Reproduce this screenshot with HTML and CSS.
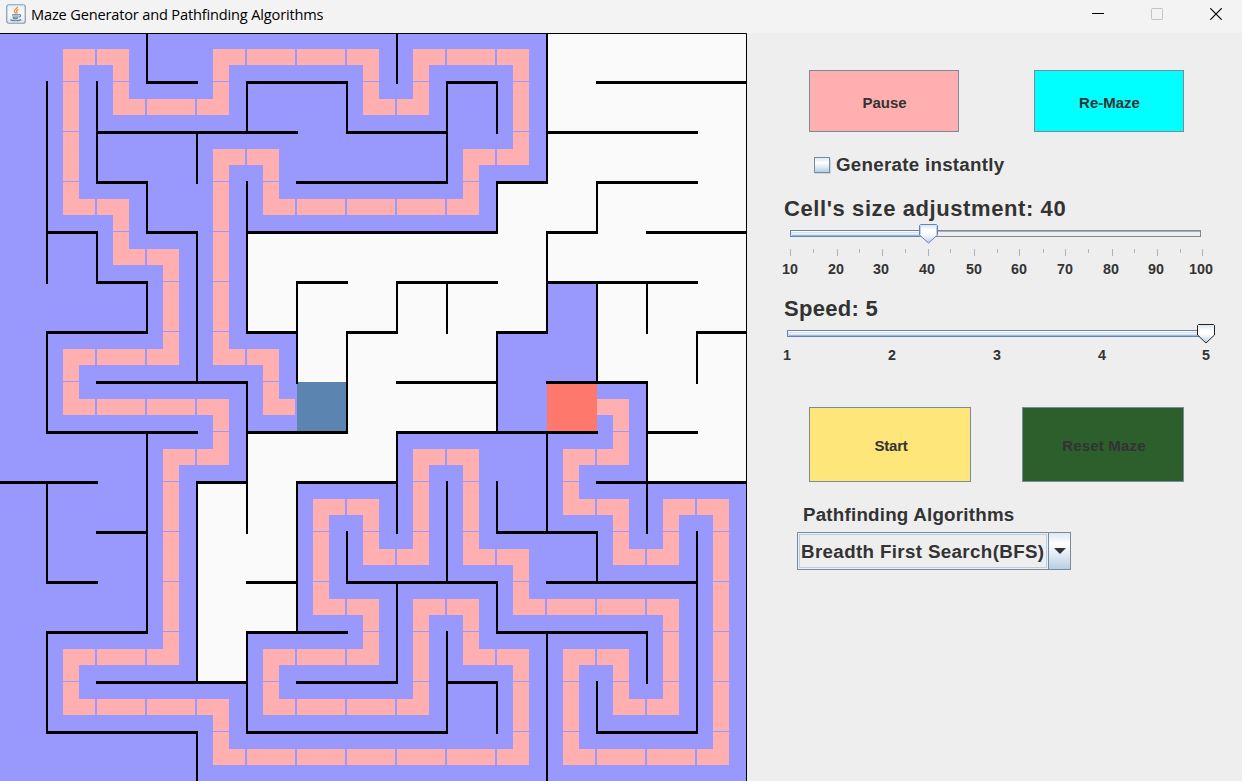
FILE: index.html
```html
<!DOCTYPE html>
<html lang="en">
<head>
<meta charset="utf-8">
<title>Maze Generator and Pathfinding Algorithms</title>
<link rel="stylesheet" href="styles.css">
</head>
<body>
<header class="titlebar">
  <svg class="app-icon" width="20" height="20" viewBox="0 0 20 20">
    <defs><linearGradient id="iconBg" x1="0" y1="0" x2="0" y2="1"><stop offset="0" stop-color="#e9eef2"/><stop offset=".5" stop-color="#fafafa"/><stop offset="1" stop-color="#dce5ec"/></linearGradient></defs>
    <rect x=".75" y=".75" width="18.5" height="18.5" rx="2" fill="url(#iconBg)" stroke="#7f9db5" stroke-width="1.2"/>
    <path d="M11.3 2.8c.8 1.700-3.400 2.700-2.900 4.600.2.900 1 1.400 1.200 2.300M12.500 5.500c-1.700.7-2.500 1.500-1.600 2.600.5.700.2 1.200-.3 1.700" fill="none" stroke="#ee8a3a" stroke-width="1.300"/>
    <path d="M6 10.800h6.700M6.500 12.700c1.700.6 4 .6 5.800 0M7 14.400c1.500.5 3.300.5 4.800 0M13 10.800c2-.6 2.300 1.800-.2 2.400M4.500 15.900c2.600 1.200 8 1.200 10.800-.3" fill="none" stroke="#5f83a5" stroke-width="1.200"/>
  </svg>
  <span class="title">Maze Generator and Pathfinding Algorithms</span>
  <div class="window-controls">
    <svg width="12" height="12" viewBox="0 0 12 12"><path d="M0 5.500h12" stroke="#000"/></svg>
    <svg width="12" height="12" viewBox="0 0 12 12"><rect x=".5" y=".5" width="11" height="11" rx=".8" fill="none" stroke="#c3c3c3"/></svg>
    <svg width="12" height="12" viewBox="0 0 12 12"><path d="M.3.300l11.400 11.400M11.700.300L.3 11.700" stroke="#000" stroke-width="1.200"/></svg>
  </div>
</header>
<main class="content">
  <svg class="maze" width="747" height="748" viewBox="0 0 747 748">
    <defs>
      <pattern id="trail" width="50" height="50" patternUnits="userSpaceOnUse">
        <rect width="50" height="50" fill="#ffafaf"/>
        <rect x="45" width="2" height="50" fill="#9998fd"/>
        <rect y="48" width="50" height="1" fill="#9998fd"/>
      </pattern>
    </defs>
    <rect width="747" height="748" fill="#9998fd"/>
    <!-- unvisited cells -->
    <path fill="#fafafa" d="M547 0V149H497V199H247V299H297V399H247V449H197V649H247V599H297V449H397V399H497V299H547V249H597V349H647V449H747V0Z"/>
    <!-- solution trail -->
    <path fill="none" stroke="url(#trail)" stroke-width="16" d="M597 374H621V424H571V474H621V524H671V474H721V724H571V624H621V674H671V574H521V524H471V424H421V524H371V474H321V574H371V624H271V674H421V574H471V624H521V724H221V674H71V624H171V424H221V374H71V324H171V224H121V174H71V24H121V74H221V24H371V74H421V24H521V124H471V174H271V124H221V324H271V374H295"/>
    <rect x="297" y="349" width="49" height="50" fill="#5b85b0"/>
    <rect x="547" y="349" width="50" height="50" fill="#ff786c"/>
    <!-- horizontal walls -->
    <path class="wall-h" d="M146 49.500H198M246 49.500H348M446 49.500H498M596 49.500H747M96 99.500H298M346 99.500H448M546 99.500H698M96 149.500H148M296 149.500H448M496 149.500H548M596 149.500H698M46 199.500H98M146 199.500H198M246 199.500H498M546 199.500H598M646 199.500H747M96 249.500H148M296 249.500H348M396 249.500H498M546 249.500H698M46 299.500H148M246 299.500H298M346 299.500H398M496 299.500H548M696 299.500H747M96 349.500H248M396 349.500H498M546 349.500H648M46 399.500H198M246 399.500H348M396 399.500H598M646 399.500H698M0 449.500H98M196 449.500H248M296 449.500H398M596 449.500H747M96 499.500H148M496 499.500H598M46 549.500H98M246 549.500H298M346 549.500H498M546 549.500H698M46 599.500H148M246 599.500H348M496 599.500H648M96 649.500H248M296 649.500H398M446 649.500H498M46 699.500H198M246 699.500H448M596 699.500H698"/>
    <!-- vertical walls -->
    <path class="wall-v" d="M47 48V251M47 298V401M47 448V551M47 598V701M97 48V151M97 198V251M147 0V51M147 148V201M147 248V301M147 398V601M197 98V151M197 198V351M197 448V651M197 698V748M247 48V101M247 148V301M247 348V501M247 598V701M297 248V351M297 448V601M347 48V101M347 298V401M347 498V551M397 0V51M397 248V301M397 398V501M397 548V651M447 48V151M447 248V301M447 448V551M447 598V701M497 48V101M497 148V201M497 298V401M497 448V501M497 548V601M497 648V701M547 0V151M547 198V301M547 398V501M547 598V748M597 148V201M597 248V351M597 498V551M597 648V701M647 248V301M647 348V501M647 598V651M697 298V351M697 498V701"/>
    <path d="M0 .500H746.500V748" fill="none" stroke="#000"/>
  </svg>
  <aside class="panel">
    <div class="row row-top">
      <button class="btn pause">Pause</button>
      <button class="btn remaze">Re-Maze</button>
    </div>
    <label class="check"><span class="box"></span><span>Generate instantly</span></label>
    <div class="heading">Cell's size adjustment: 40</div>
    <svg class="slider size" width="458" height="60" viewBox="784 220 458 60">
      <defs>
        <linearGradient id="thumb" x1="0" y1="0" x2="0" y2="1"><stop offset="0" stop-color="#d5e2f0"/><stop offset=".3" stop-color="#fff"/><stop offset=".5" stop-color="#fff"/><stop offset="1" stop-color="#b8cfe5"/></linearGradient>
      </defs>
      <rect x="790.5" y="230.500" width="410" height="6" fill="#eee" stroke="#7a8a99"/>
      <path d="M790 231.500H1200" stroke="#a3b0bd"/>
      <rect x="790.5" y="230.500" width="138" height="6" fill="#d3e2f1" stroke="#6382bf"/>
      <path d="M791 231.500H928" stroke="#fff"/><path d="M792 233.500H928" stroke="#f4f8fc"/><path d="M792 235.500H928" stroke="#a3b8cc"/>
      <path d="M919.5 225.500l1-1h16l1 1v9.500l-9 8-9-8z" fill="url(#thumb)" stroke="#6382bf"/>
      <path d="M920.500 226v8.500M936.500 226v8.500" stroke="#b8cfe5"/>
      <path stroke="#a3b8cc" d="M790.500 249v7M837.500 249v7M882.500 249v7M928.500 249v7M974.500 249v7M1019.500 249v7M1065.500 249v7M1112.500 249v7M1157.500 249v7M1202.500 249v7M813.500 249v4M859.500 249v4M905.500 249v4M950.500 249v4M997.500 249v4M1043.500 249v4M1088.500 249v4M1134.500 249v4M1180.500 249v4"/>
      <g class="scale"><text x="790" y="274">10</text><text x="836" y="274">20</text><text x="881" y="274">30</text><text x="927" y="274">40</text><text x="974" y="274">50</text><text x="1019" y="274">60</text><text x="1065" y="274">70</text><text x="1111" y="274">80</text><text x="1156" y="274">90</text><text x="1201" y="274">100</text></g>
    </svg>
    <div class="heading speed">Speed: 5</div>
    <svg class="slider rate" width="458" height="50" viewBox="784 320 458 50">
      <rect x="787.5" y="330.500" width="418" height="6" fill="#d3e2f1" stroke="#6382bf"/>
      <path d="M788 331.500H1200" stroke="#fff"/><path d="M789 333.500H1200" stroke="#f4f8fc"/><path d="M789 335.500H1200" stroke="#a3b8cc"/>
      <path d="M1197.500 325.500l1-1h15l1 1v9.500l-8.500 8-8.500-8z" fill="url(#thumb)" stroke="#222"/>
      <g class="scale"><text x="787" y="360">1</text><text x="892" y="360">2</text><text x="997" y="360">3</text><text x="1102" y="360">4</text><text x="1206" y="360">5</text></g>
    </svg>
    <div class="row row-run">
      <button class="btn start">Start</button>
      <button class="btn reset">Reset Maze</button>
    </div>
    <div class="algo-label">Pathfinding Algorithms</div>
    <div class="combo">
      <div class="combo-value">Breadth First Search(BFS)</div>
      <div class="combo-arrow"><svg width="12" height="6" viewBox="0 0 12 6"><path d="M0 0h12L6 6z" fill="#333"/></svg></div>
    </div>
  </aside>
</main>
</body>
</html>
```
FILE: styles.css
```css
* { box-sizing: border-box; }
body {
  margin: 0;
  width: 1242px;
  height: 781px;
  overflow: hidden;
  background: #eeeeee;
  color: #333333;
  font-family: "Liberation Sans", Arial, sans-serif;
  font-weight: bold;
}
svg { display: block; flex: none; }
.titlebar {
  display: flex;
  height: 33px;
  padding: 4px 20px 0 6px;
  background: #f3f3f3;
}
.title {
  margin-left: 5px;
  color: #000;
  font: 14.6px/20px "Open Sans", "Noto Sans", sans-serif;
  letter-spacing: -0.17px;
  white-space: nowrap;
}
.window-controls { display: flex; gap: 47px; margin: 4px 0 0 auto; }
.content { display: flex; height: 748px; }
.wall-h { fill: none; stroke: #000; stroke-width: 3; }
.wall-v { fill: none; stroke: #000; stroke-width: 2; }
.panel { flex: 1; padding: 37px 0 0 37px; }
.row { display: flex; padding-left: 25px; }
.row-top { gap: 75px; }
.row-run { gap: 51px; margin-top: 37px; }
.btn {
  padding: 3px 0 0 1px;
  border: 1px solid #7a8a99;
  color: #333333;
  font: bold 15px "Liberation Sans", Arial, sans-serif;
}
.pause, .remaze { width: 150px; height: 62px; }
.start, .reset { width: 162px; height: 75px; padding: 2px 0 0 2px; }
.start { letter-spacing: -0.2px; }
.reset { letter-spacing: 0.2px; }
.pause { background: #ffafaf; }
.remaze { background: #00ffff; }
.start { background: #ffe67a; }
.reset { background: #2d5f2d; }
.check {
  display: flex;
  align-items: center;
  gap: 6px;
  height: 22px;
  margin: 22px 0 0 30px;
  font-size: 18.75px;
  letter-spacing: 0.27px;
}
.box {
  width: 16px;
  height: 16px;
  border: 1px solid #7a8a99;
  box-shadow: 1px 1px #c5d7e9;
  background: linear-gradient(#dde8f3, #ffffff 35%, #b8cfe5);
}
.heading {
  height: 23px;
  margin-top: 21px;
  font-size: 22px;
  line-height: 24px;
  letter-spacing: 0.59px;
  white-space: nowrap;
}
.speed { margin-top: 17px; letter-spacing: 0.3px; }
.slider { overflow: visible; }
.scale { fill: #333333; font-size: 14.3px; text-anchor: middle; }
.algo-label {
  height: 22px;
  margin: 22px 0 0 19px;
  font-size: 18.75px;
  line-height: 22px;
  letter-spacing: 0.22px;
}
.combo {
  display: flex;
  width: 274px;
  height: 38px;
  margin: 6px 0 0 13px;
  border: 1px solid #7a8a99;
}
.combo-value {
  width: 248px;
  margin: 1px 0 1px 1px;
  padding-left: 1px;
  border: 1px solid #b8cfe5;
  font-size: 18.75px;
  line-height: 34px;
  letter-spacing: 0.36px;
  white-space: nowrap;
}
.combo-arrow {
  display: flex;
  flex: 1;
  align-items: center;
  justify-content: center;
  margin-left: 1px;
  border-left: 1px solid #7a8a99;
  background: linear-gradient(#dde8f3, #ffffff 30%, #b8cfe5);
}
```
